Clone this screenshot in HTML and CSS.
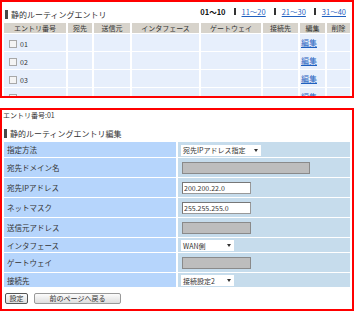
FILE: index.html
```html
<!DOCTYPE html>
<html>
  <head>
    <meta charset="utf-8">
    <title>静的ルーティングエントリ</title>
    <link rel="stylesheet" href="styles.css">
  </head>
  <body>
    <div class="panel list-panel">
      <div class="panel-head">
        <h2 class="sec-title">静的ルーティングエントリ</h2>
        <div class="pager">
          <b>01～10</b>
          <span class="sep"></span>
          <a href="#">11～20</a>
          <span class="sep"></span>
          <a href="#">21～30</a>
          <span class="sep"></span>
          <a href="#">31～40</a>
        </div>
      </div>
      <table class="list">
        <colgroup>
          <col style="width: 62px">
          <col style="width: 24px">
          <col style="width: 36px">
          <col style="width: 67px">
          <col style="width: 60px">
          <col style="width: 35px">
          <col style="width: 25px">
          <col style="width: 23px">
        </colgroup>
        <tr>
          <th>エントリ番号</th>
          <th>宛先</th>
          <th>送信元</th>
          <th>インタフェース</th>
          <th>ゲートウェイ</th>
          <th>接続先</th>
          <th>編集</th>
          <th>削除</th>
        </tr>
        <tr>
          <td class="num"><span class="chk"></span>01</td>
          <td></td><td></td><td></td><td></td><td></td>
          <td class="edit"><a href="#">編集</a></td>
          <td></td>
        </tr>
        <tr>
          <td class="num"><span class="chk"></span>02</td>
          <td></td><td></td><td></td><td></td><td></td>
          <td class="edit"><a href="#">編集</a></td>
          <td></td>
        </tr>
        <tr>
          <td class="num"><span class="chk"></span>03</td>
          <td></td><td></td><td></td><td></td><td></td>
          <td class="edit"><a href="#">編集</a></td>
          <td></td>
        </tr>
        <tr>
          <td class="num"><span class="chk"></span>04</td>
          <td></td><td></td><td></td><td></td><td></td>
          <td class="edit"><a href="#">編集</a></td>
          <td></td>
        </tr>
      </table>
    </div>

    <div class="panel edit-panel">
      <p class="entry-no">エントリ番号:01</p>
      <h2 class="sec-title">静的ルーティングエントリ編集</h2>
      <table class="form">
        <tr class="short first">
          <td class="label">指定方法</td>
          <td class="field"><span class="select sel-method">宛先IPアドレス指定<i class="arrow"></i></span></td>
        </tr>
        <tr>
          <td class="label">宛先ドメイン名</td>
          <td class="field"><input class="text wide" type="text" disabled></td>
        </tr>
        <tr>
          <td class="label">宛先IPアドレス</td>
          <td class="field"><input class="text" type="text" value="200.200.22.0"></td>
        </tr>
        <tr>
          <td class="label">ネットマスク</td>
          <td class="field"><input class="text" type="text" value="255.255.255.0"></td>
        </tr>
        <tr>
          <td class="label">送信元アドレス</td>
          <td class="field"><input class="text" type="text" disabled></td>
        </tr>
        <tr class="short">
          <td class="label">インタフェース</td>
          <td class="field"><span class="select sel-small">WAN側<i class="arrow"></i></span></td>
        </tr>
        <tr>
          <td class="label">ゲートウェイ</td>
          <td class="field"><input class="text" type="text" disabled></td>
        </tr>
        <tr class="short">
          <td class="label">接続先</td>
          <td class="field"><span class="select sel-small">接続設定2<i class="arrow"></i></span></td>
        </tr>
      </table>
      <div class="buttons">
        <button type="button" class="btn btn-default">設定</button>
        <button type="button" class="btn btn-back">前のページへ戻る</button>
      </div>
    </div>
  </body>
</html>
```

FILE: styles.css
```css
body {
  margin: 0;
  font-family: "Noto Sans CJK JP", sans-serif;
  color: #333;
  background-color: #fff;
}

.panel {
  width: 354px;
  box-sizing: border-box;
  border: 2px solid #ff0000;
  overflow: hidden;
}

.list-panel {
  height: 98px;
}

.edit-panel {
  height: 203px;
  margin-top: 10px;
}

.panel-head {
  display: flex;
  justify-content: space-between;
  align-items: flex-start;
  height: 20px;
}

.sec-title {
  margin: 8px 0 0 3px;
  padding-left: 3px;
  border-left: 3px solid #4a4a4a;
  font-size: 8px;
  font-weight: normal;
  line-height: 9px;
  color: #333;
}

.pager {
  display: flex;
  align-items: center;
  padding: 5px 6px 0 0;
  font-size: 7.5px;
  line-height: 9px;
}

.pager b {
  color: #111;
}

.pager a {
  color: #1f5fbf;
}

.sep {
  display: inline-block;
  width: 2px;
  height: 7px;
  margin: 0 6px 0 8px;
  background-color: #333;
}

/* list table */
.list {
  width: 350px;
  table-layout: fixed;
  border-spacing: 2px 1px;
}

.list th {
  height: 10px;
  padding: 0;
  background-color: #d7d3cb;
  font-size: 7px;
  font-weight: normal;
  line-height: 10px;
  color: #333;
  text-align: center;
  white-space: nowrap;
  overflow: hidden;
}

.list td {
  height: 17px;
  box-sizing: border-box;
  padding: 0 0 3px 0;
  background-color: #e7effc;
  font-size: 7px;
  line-height: 8px;
  vertical-align: bottom;
}

.list td.num {
  padding-left: 5px;
}

.chk {
  display: inline-block;
  width: 6px;
  height: 6px;
  margin-right: 3px;
  border: 1px solid #a8a8a8;
  background-color: #f4f4f4;
  vertical-align: -1px;
}

.list td.edit {
  padding-left: 1px;
  font-size: 8px;
  line-height: 10px;
}

.list td.edit a {
  color: #1f5fbf;
}

/* edit form */
.entry-no {
  margin: 0;
  padding-left: 1px;
  font-size: 7px;
  line-height: 11px;
}

.edit-panel .sec-title {
  margin: 8px 0 3px 2px;
}

.form {
  width: 350px;
  table-layout: fixed;
  border-spacing: 2px 1px;
}

.form td {
  height: 19px;
  padding: 0 0 0 3px;
  font-size: 7.5px;
  vertical-align: middle;
}

.form tr.short td {
  height: 14px;
}

.form tr.first td {
  height: 15px;
}

.form td.label {
  background-color: #b6d5fc;
}

.form td.field {
  background-color: #c6dcec;
}

.select {
  display: inline-flex;
  align-items: center;
  justify-content: space-between;
  box-sizing: border-box;
  height: 11px;
  padding: 0 3px 0 2px;
  background-color: #fff;
  font-size: 7px;
  vertical-align: middle;
}

.sel-method {
  width: 80px;
}

.sel-small {
  width: 53px;
}

.arrow {
  width: 0;
  height: 0;
  border-left: 2px solid transparent;
  border-right: 2px solid transparent;
  border-top: 3px solid #333;
}

.text {
  box-sizing: border-box;
  width: 69px;
  height: 12px;
  margin: 0 0 0 1px;
  padding: 0 1px;
  border: 1px solid #999;
  border-top-color: #777;
  border-left-color: #777;
  background-color: #fff;
  font-family: "Noto Sans CJK JP", sans-serif;
  font-size: 7px;
  color: #333;
  vertical-align: middle;
}

.text.wide {
  width: 128px;
}

.text:disabled {
  background-color: #bdbdbd;
  border-color: #8a8a8a;
}

.buttons {
  display: flex;
  gap: 6px;
  padding: 5px 0 0 3px;
}

.btn {
  height: 11px;
  padding: 0;
  border: 1px solid #999;
  border-radius: 2px;
  background: linear-gradient(#fcfcfc, #dedede);
  font-family: "Noto Sans CJK JP", sans-serif;
  font-size: 7px;
  line-height: 9px;
  color: #333;
}

.btn-default {
  width: 23px;
  border-color: #555;
}

.btn-back {
  width: 87px;
}
```
